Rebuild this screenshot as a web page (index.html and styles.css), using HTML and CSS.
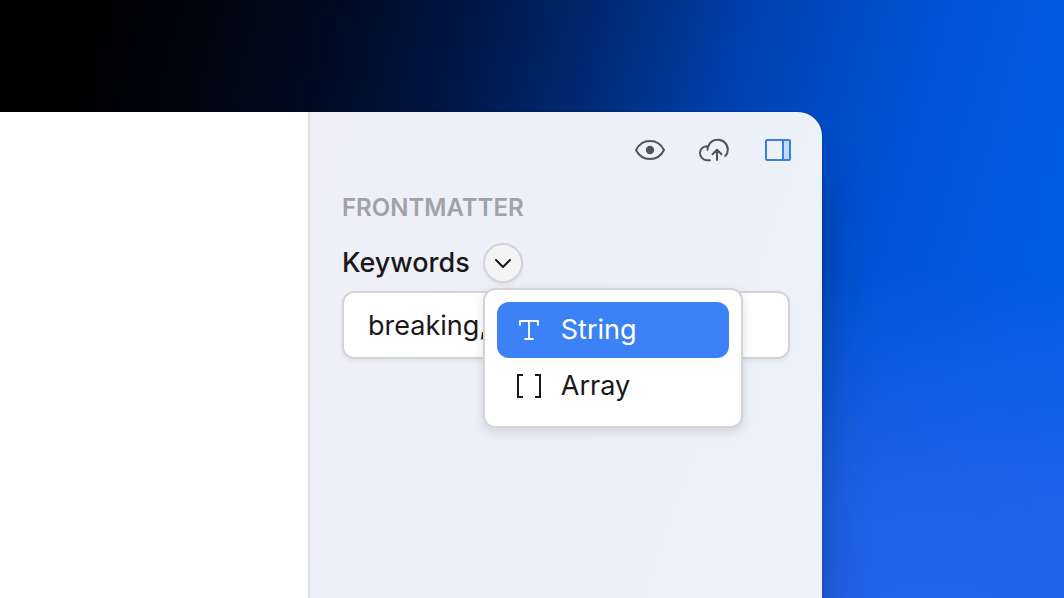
FILE: index.html
```html
<!DOCTYPE html>
<html lang="en">
<head>
<meta charset="utf-8">
<meta name="viewport" content="width=device-width, initial-scale=1">
<title>Frontmatter</title>
<link rel="stylesheet" href="styles.css">
</head>
<body>
<div class="window">
  <main class="editor"></main>
  <aside class="sidebar">
    <div class="toolbar">
      <button class="tool" type="button" aria-label="Preview">
        <svg viewBox="0 0 32 32" fill="none" stroke="currentColor" stroke-width="2"><path d="M2 16C5 10 10 7 16 7s11 3 14 9c-3 6-8 9-14 9S5 22 2 16Z" stroke-linejoin="round"/><circle cx="16" cy="16" r="4.2" fill="currentColor" stroke="none"/></svg>
      </button>
      <button class="tool" type="button" aria-label="Publish">
        <svg viewBox="0 0 32 32" fill="none" stroke="currentColor" stroke-width="2" stroke-linecap="round" stroke-linejoin="round"><path d="M12 26.200H8.800A7 7 0 0 1 2 19.300c0-4.600 3.700-7.600 8.300-7A10.200 10.200 0 0 1 20 5.800c5.600 0 9.800 4.400 9.800 9.900 0 2.500-.8 4.700-2.500 6.300M10.300 12.300c-.6 1.100-.8 2.200-.7 3.500M19 26V16M14.500 20.200 19 15.700l4.500 4.500"/></svg>
      </button>
      <button class="tool tool-active" type="button" aria-label="Toggle sidebar">
        <svg viewBox="0 0 32 32" fill="none" stroke="currentColor" stroke-width="2"><path d="M21 6h7v20h-7z" fill="#c6dbfb" stroke="none"/><rect x="4" y="6" width="24" height="20" rx="1"/><path d="M21 6v20"/></svg>
      </button>
    </div>
    <section class="panel">
      <h2 class="panel-title">FRONTMATTER</h2>
      <div class="field-head">
        <label class="field-label" for="keywords">Keywords</label>
        <div class="type-picker">
          <button class="type-toggle" type="button" aria-label="Field type" aria-haspopup="menu" aria-expanded="true">
            <svg viewBox="0 0 20 20" fill="none" stroke="currentColor" stroke-width="2" stroke-linecap="round" stroke-linejoin="round"><path d="m3 7 7 7 7-7"/></svg>
          </button>
          <div class="menu" role="menu">
            <button class="menu-item menu-item-active" type="button" role="menuitem">
              <svg viewBox="0 0 32 32" fill="none" stroke="currentColor" stroke-width="1.800" stroke-linecap="round" stroke-linejoin="round"><path d="M7 11V7h18v4M16 7v18M12 25h8"/></svg>
              String
            </button>
            <button class="menu-item" type="button" role="menuitem">
              <svg viewBox="0 0 32 32" fill="none" stroke="currentColor" stroke-width="2"><path d="M10 5H5v22h5M22 5h5v22h-5"/></svg>
              Array
            </button>
          </div>
        </div>
      </div>
      <input class="field-input" id="keywords" type="text" value="breaking,">
    </section>
  </aside>
</div>
</body>
</html>
```
FILE: styles.css
```css
* {
  box-sizing: border-box;
}

body {
  margin: 0;
  min-height: 100vh;
  display: flex;
  padding: 112px 242px 0 0;
  overflow: hidden;
  font-family: Inter, "Liberation Sans", sans-serif;
  font-size: 27px;
  line-height: 40px;
  color: #18181b;
  background:
    radial-gradient(ellipse 60% 60% at 88% 105%, #2563eb 0%, rgba(37, 99, 235, 0.8) 40%, rgba(37, 99, 235, 0) 100%),
    linear-gradient(105deg, #000 8%, #000a20 27%, #001646 39%, #002a74 50%, #0041b0 62%, #0053d6 77%, #005ce2 90%, #0060e6 100%);
}

button,
input {
  font: inherit;
  color: inherit;
  margin: 0;
}

button {
  padding: 0;
  border: 0;
  background: none;
}

svg {
  display: block;
}

.window {
  flex: 1;
  display: flex;
  border-top-right-radius: 24px;
  box-shadow: 0 0 2px rgba(0, 0, 0, 0.4), 0 52px 56px -14px rgba(0, 0, 0, 0.45);
}

.editor {
  flex: 1;
  background: #fff;
}

.sidebar {
  flex: 0 0 514px;
  border-left: 2px solid #e0e0e5;
  border-top-right-radius: 24px;
  background: linear-gradient(110deg, #f0f0f6 0%, #edf0f8 50%, #edf2f8 100%);
}

.toolbar {
  display: flex;
  justify-content: flex-end;
  gap: 32px;
  padding: 22px 28px;
}

.tool {
  width: 32px;
  height: 32px;
  color: #52525b;
}

.tool-active {
  color: #3b7fe4;
}

.panel {
  padding: 0 32px;
}

.panel-title {
  margin: 0 0 15px;
  font-size: 24px;
  line-height: 40px;
  font-weight: 600;
  color: #a1a1aa;
}

.field-head {
  display: flex;
  align-items: center;
  gap: 13px;
  margin-bottom: 8px;
}

.field-label {
  font-weight: 500;
}

.type-picker {
  position: relative;
}

.type-toggle {
  display: grid;
  place-items: center;
  width: 40px;
  height: 40px;
  border: 2px solid #d4d4d8;
  border-radius: 50%;
  background: #f4f4f5;
  box-shadow: 0 2px 4px rgba(0, 0, 0, 0.06);
}

.type-toggle svg {
  width: 20px;
  height: 20px;
}

.menu {
  position: absolute;
  top: 45px;
  left: 0;
  width: 260px;
  padding: 12px;
  border: 2px solid #d4d4d8;
  border-radius: 12px;
  background: #fff;
  box-shadow: 0 4px 12px rgba(0, 0, 0, 0.12);
}

.menu-item {
  display: flex;
  align-items: center;
  gap: 16px;
  width: 100%;
  height: 56px;
  padding: 0 16px;
  border-radius: 12px;
}

.menu-item svg {
  width: 32px;
  height: 32px;
}

.menu-item-active {
  background: #3c82f6;
  color: #fff;
}

.field-input {
  display: block;
  width: 100%;
  height: 68px;
  padding: 0 24px;
  border: 2px solid #d4d4d8;
  border-radius: 12px;
  background: #fff;
  box-shadow: 0 2px 4px rgba(0, 0, 0, 0.06);
}
```
